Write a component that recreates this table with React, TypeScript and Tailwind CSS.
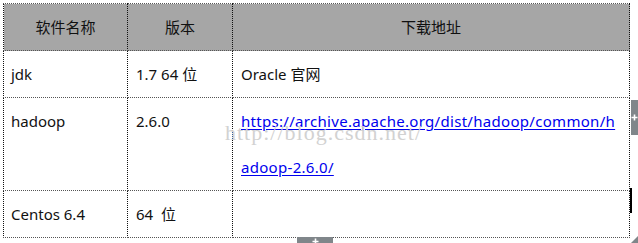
import React from 'react';

const rows = [
  { name: 'jdk', version: '1.7 64 位', addr: 'Oracle 官网', link: false },
  { name: 'hadoop', version: '2.6.0', addr: '', link: true },
  { name: 'Centos 6.4', version: '64  位', addr: '', link: false },
];

const Plus: React.FC = () => (
  <svg width="7" height="7" viewBox="0 0 7 7">
    <path d="M3.5 0.5 V6.5 M0.5 3.5 H6.5" stroke="#fff" strokeWidth="1.6" />
  </svg>
);

const App: React.FC = () => {
  return (
    <div
      className="relative w-[638px] h-[243px] bg-white overflow-hidden pt-[3px] pl-[3px] text-[#111]"
      style={{ fontFamily: '"Noto Sans", "Noto Sans CJK SC", sans-serif' }}
    >
      <table className="border-collapse table-fixed w-[627px] text-[15px] leading-[46px]">
        <colgroup>
          <col className="w-[124px]" />
          <col className="w-[105px]" />
          <col />
        </colgroup>
        <thead>
          <tr className="bg-[#a6a6a6]">
            <th className="font-normal text-center border border-dotted border-y-[#555] border-x-[#111] h-[46px] p-0">软件名称</th>
            <th className="font-normal text-center border border-dotted border-y-[#555] border-x-[#111] p-0">版本</th>
            <th className="font-normal text-center border border-dotted border-y-[#555] border-x-[#111] p-0">下载地址</th>
          </tr>
        </thead>
        <tbody>
          {rows.map((r) => (
            <tr key={r.name}>
              <td className="align-top border border-dotted border-y-[#555] border-x-[#111] pl-[7px] pr-2 py-0 h-[47px]">{r.name}</td>
              <td className="align-top border border-dotted border-y-[#555] border-x-[#111] px-2 py-0 whitespace-pre">{r.version}</td>
              <td className="align-top border border-dotted border-y-[#555] border-x-[#111] px-2 py-0">
                {r.link ? (
                  <a href="#" className="text-[#0000ee] underline underline-offset-2 tracking-[0.3px] whitespace-nowrap">
                    https://archive.apache.org/dist/hadoop/common/h
                    <br />
                    adoop-2.6.0/
                  </a>
                ) : (
                  r.addr
                )}
              </td>
            </tr>
          ))}
        </tbody>
      </table>

      {/* watermark */}
      <div
        className="absolute left-[225px] top-[122px] text-[22px] leading-none tracking-[1px] text-[#d2d2d2] pointer-events-none whitespace-nowrap"
        style={{ fontFamily: '"Liberation Serif", serif' }}
      >
        http://blog.csdn.net/
      </div>

      {/* editor handles */}
      <div className="absolute left-[631px] top-[100px] w-[7px] h-[35px] bg-[#80868a] flex items-center justify-center">
        <Plus />
      </div>
      <div className="absolute left-[630px] top-[188px] w-[2px] h-[25px] bg-black" />
      <div className="absolute left-[297px] top-[237px] w-[36px] h-[6px] bg-[#80868a] flex items-start justify-center pt-[1px]">
        <Plus />
      </div>
      <svg className="absolute left-[631px] top-[236px]" width="7" height="7" viewBox="0 0 7 7">
        <path d="M7 0 L7 7 L0 7 Z" fill="#80868a" />
      </svg>
    </div>
  );
};

export default App;
